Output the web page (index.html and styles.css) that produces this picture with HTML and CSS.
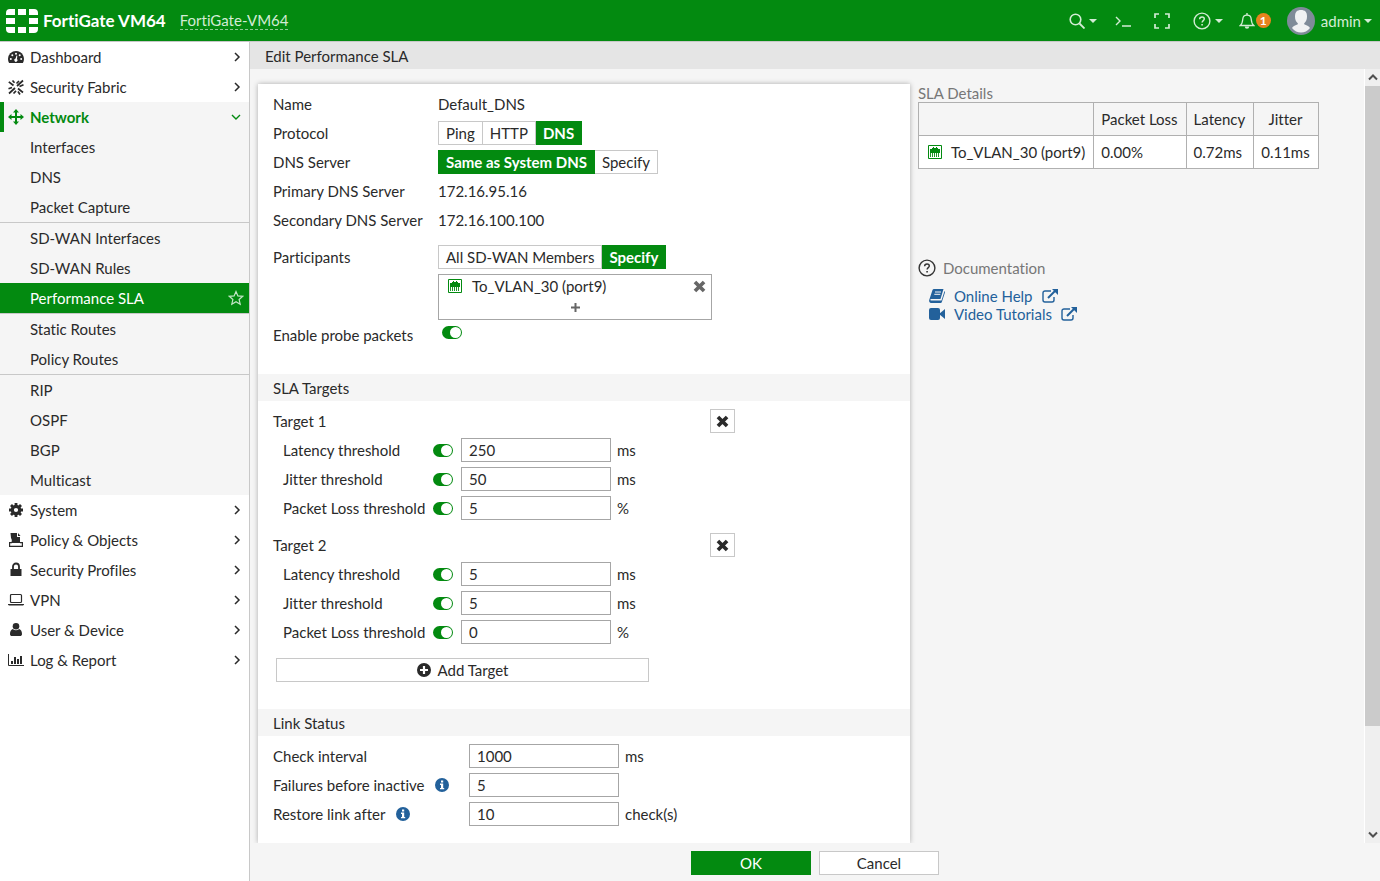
FILE: index.html
```html
<!DOCTYPE html>
<html lang="en">
<head>
<meta charset="utf-8">
<title>FortiGate - Edit Performance SLA</title>
<link rel="stylesheet" href="styles.css">
</head>
<body>
<svg class="sprite" aria-hidden="true">
  <symbol id="chev" viewBox="0 0 8 10"><path d="M2 1l4 4-4 4" fill="none" stroke="currentColor" stroke-width="1.500"/></symbol>
  <symbol id="caret" viewBox="0 0 8 4"><path d="M0 0h8L4 4z" fill="currentColor"/></symbol>
  <symbol id="port" viewBox="0 0 14 14"><path d="M.5.5h13v13H.5z" fill="#fff" stroke="#038a10"/><path d="M2 4h2V3h1V2h1v1h2V2h1v1h1v1h2v4H2z" fill="#038a10"/><path d="M2.500 8v4M4.500 8v4M6.500 8v4M8.500 8v4M10.500 8v4" stroke="#038a10" stroke-width=".9"/></symbol>
  <symbol id="cross" viewBox="0 0 12 12"><path d="M1.800 1.800l8.400 8.400M10.200 1.800l-8.400 8.400" stroke="currentColor" stroke-width="3.400"/></symbol>
  <symbol id="info" viewBox="0 0 14 14"><circle cx="7" cy="7" r="7" fill="currentColor"/><path d="M6 2.500h2.200v2H6zM5 5.600h3.200v4.300h1v1.400H5V9.900h1V7H5z" fill="#fff"/></symbol>
  <symbol id="help" viewBox="0 0 18 18"><circle cx="9" cy="9" r="7.900" fill="none" stroke="currentColor" stroke-width="1.400"/><path d="M6.600 7.200C6.700 5.700 7.700 5 9 5s2.300.8 2.300 2c0 1.600-2.200 1.700-2.200 3.500" fill="none" stroke="currentColor" stroke-width="1.400"/><path d="M8.300 12h1.600v1.500H8.300z" fill="currentColor"/></symbol>
  <symbol id="ext" viewBox="0 0 16 14"><path d="M9 2H3a2 2 0 0 0-2 2v7a2 2 0 0 0 2 2h7a2 2 0 0 0 2-2V8" fill="none" stroke="currentColor" stroke-width="1.400"/><path d="M6 9l7-7" stroke="currentColor" stroke-width="2"/><path d="M10 0h6v6z" fill="currentColor"/></symbol>
</svg>

<header class="topbar">
  <svg class="logo" viewBox="0 0 32 24" role="img" aria-label="Fortinet"><path fill="#fff" d="M4 0h5v6H0V4a4 4 0 0 1 4-4zM12 0h8v6h-8zM23 0h5a4 4 0 0 1 4 4v2h-9zM0 9h9v6H0zM23 9h9v6h-9zM0 18h9v6H4a4 4 0 0 1-4-4zM12 18h8v6h-8zM23 18h9v2a4 4 0 0 1-4 4h-5z"/></svg>
  <span class="product">FortiGate VM64</span>
  <a class="hostname" href="#">FortiGate-VM64</a>
  <div class="tools">
    <button class="tool tool-menu" aria-label="Search"><svg width="16" height="16" viewBox="0 0 16 16"><circle cx="6.500" cy="6.500" r="5.300" fill="none" stroke="currentColor" stroke-width="1.600"/><path d="M10.500 10.500l5 5" stroke="currentColor" stroke-width="1.800"/></svg><svg width="8" height="4"><use href="#caret"/></svg></button>
    <button class="tool" aria-label="CLI console"><svg width="16" height="12" viewBox="0 0 16 12"><path d="M1 2l4 4-4 4M7 11h9" fill="none" stroke="currentColor" stroke-width="1.400"/></svg></button>
    <button class="tool" aria-label="Full screen"><svg width="16" height="16" viewBox="0 0 16 16"><path d="M1 5V1h4M11 1h4v4M15 11v4h-4M5 15H1v-4" fill="none" stroke="currentColor" stroke-width="1.700"/></svg></button>
    <button class="tool tool-menu" aria-label="Help"><svg width="18" height="18"><use href="#help"/></svg><svg width="8" height="4"><use href="#caret"/></svg></button>
    <button class="tool tool-bell" aria-label="Notifications"><svg width="16" height="16" viewBox="0 0 16 16"><path d="M1.300 12.500C3.500 10.700 3.600 8.500 3.800 6 4 3.500 5.500 2.200 8 2.200S12 3.500 12.200 6c.2 2.500.3 4.700 2.500 6.500z" fill="none" stroke="currentColor" stroke-width="1.300"/><path d="M7.300 0h1.400v2H7.300zM5.800 13.500h4.400a2.200 2.200 0 0 1-4.400 0z" fill="currentColor"/></svg><span class="badge">1</span></button>
    <button class="tool tool-user"><svg class="avatar" width="28" height="28" viewBox="0 0 28 28"><circle cx="14" cy="14" r="14" fill="#7f8b99"/><path d="M14 3c4 0 6 2 6 6.500 0 3-1 5.500-2.800 6.800v1c2 1.200 5 1.700 5.800 3.700-2.500 3-5.500 4.500-9 4.500s-6.500-1.500-9-4.500c.8-2 3.800-2.500 5.800-3.700v-1C9 15 8 12.500 8 9.500 8 5 10 3 14 3z" fill="#f0f1f3"/></svg><span>admin</span><svg width="8" height="4"><use href="#caret"/></svg></button>
  </div>
</header>

<div class="shell">
  <nav class="sidebar">
    <a class="item" href="#"><svg class="ico" viewBox="0 0 16 16"><path d="M8 2a8 8 0 0 0-8 8c0 1.500.4 2.900 1.100 4h13.800A8 8 0 0 0 8 2z" fill="currentColor"/><g fill="#fff"><circle cx="2.800" cy="10" r="1"/><circle cx="4.300" cy="6.300" r="1"/><circle cx="8" cy="4.700" r="1"/><circle cx="11.700" cy="6.300" r="1"/><circle cx="13.200" cy="10" r="1"/><path d="M8.500 6.500l.8.200L9 10a1.600 1.600 0 1 1-1.400-.4z"/></g></svg><span>Dashboard</span><svg class="chev"><use href="#chev"/></svg></a>
    <a class="item" href="#"><svg class="ico" viewBox="0 0 16 16"><path d="M0.800 2.800L5.500 6.500M10 9.500l5 4M1 14.500L7 9M9 7l6-5.500M4.500 1.500l2 2.200M8.500 4.500L11 2M0.500 9.800L4 8.500M11.500 7.500l4-1.800M5.500 14.500L8 11.800M10 12.500l2 3" fill="none" stroke="currentColor" stroke-width="1.700"/></svg><span>Security Fabric</span><svg class="chev"><use href="#chev"/></svg></a>
    <a class="item open" href="#"><svg class="ico" viewBox="0 0 16 16"><path d="M8 0l3 3.500H9V7h3.500V5L16 8l-3.500 3V9H9v3.500h2L8 16l-3-3.500h2V9H3.500v2L0 8l3.500-3v2H7V3.500H5z" fill="currentColor"/></svg><span>Network</span><svg class="chev-open" viewBox="0 0 10 8"><path d="M1 2l4 4 4-4" fill="none" stroke="currentColor" stroke-width="1.400"/></svg></a>
    <div class="sub">
      <a class="subitem" href="#">Interfaces</a>
      <a class="subitem" href="#">DNS</a>
      <a class="subitem ruled" href="#">Packet Capture</a>
      <a class="subitem" href="#">SD-WAN Interfaces</a>
      <a class="subitem" href="#">SD-WAN Rules</a>
      <a class="subitem ruled current" href="#" aria-current="page">Performance SLA<svg class="star" viewBox="0 0 16 16"><path d="M8 1.500l1.900 4.400 4.900.4-3.700 3.200 1.100 4.700L8 11.700l-4.200 2.500 1.100-4.700-3.700-3.200 4.900-.4z" fill="none" stroke="currentColor" stroke-width="1.200"/></svg></a>
      <a class="subitem" href="#">Static Routes</a>
      <a class="subitem ruled" href="#">Policy Routes</a>
      <a class="subitem" href="#">RIP</a>
      <a class="subitem" href="#">OSPF</a>
      <a class="subitem" href="#">BGP</a>
      <a class="subitem" href="#">Multicast</a>
    </div>
    <a class="item" href="#"><svg class="ico" viewBox="0 0 16 16"><circle cx="8" cy="8" r="3.700" fill="none" stroke="currentColor" stroke-width="3.200"/><path d="M8 1v3M8 12v3M1 8h3M12 8h3M3 3l2.200 2.200M10.800 10.800L13 13M13 3l-2.200 2.200M5.200 10.800L3 13" stroke="currentColor" stroke-width="2.800"/></svg><span>System</span><svg class="chev"><use href="#chev"/></svg></a>
    <a class="item" href="#"><svg class="ico" viewBox="0 0 16 16"><path d="M2.500 1H9v4h3v6H3c1.200-2 1-3 0-5z" fill="currentColor"/><path d="M10 1l2.500 3H10z" fill="currentColor"/><path d="M4 10.600H1.600v3.800h12.800v-3.800H12" fill="none" stroke="currentColor" stroke-width="1.200"/></svg><span>Policy &amp; Objects</span><svg class="chev"><use href="#chev"/></svg></a>
    <a class="item" href="#"><svg class="ico" viewBox="0 0 16 16"><path d="M2.500 7h11v7h-11z" fill="currentColor"/><path d="M5 7V4.500a3 3 0 0 1 6 0V7" fill="none" stroke="currentColor" stroke-width="1.800"/></svg><span>Security Profiles</span><svg class="chev"><use href="#chev"/></svg></a>
    <a class="item" href="#"><svg class="ico" viewBox="0 0 16 16"><rect x="2.500" y="2.500" width="11" height="8" rx="1" fill="none" stroke="currentColor" stroke-width="1.200"/><path d="M0 12h16v.8l-1 .7H1l-1-.7z" fill="currentColor"/></svg><span>VPN</span><svg class="chev"><use href="#chev"/></svg></a>
    <a class="item" href="#"><svg class="ico" viewBox="0 0 16 16"><circle cx="8" cy="4.200" r="3.300" fill="currentColor"/><path d="M4.800 7C3 7.500 2 9.500 2 12c0 1.500.8 2 2 2h8c1.200 0 2-.5 2-2 0-2.500-1-4.500-2.800-5-1.900 1.600-4.500 1.600-6.400 0z" fill="currentColor"/></svg><span>User &amp; Device</span><svg class="chev"><use href="#chev"/></svg></a>
    <a class="item" href="#"><svg class="ico" viewBox="0 0 16 16"><path d="M.5 2v11.500H16" fill="none" stroke="currentColor"/><path d="M3 9h2v3H3zM6 5h2v7H6zM9 7h2v5H9zM12 4h2v8h-2z" fill="currentColor"/></svg><span>Log &amp; Report</span><svg class="chev"><use href="#chev"/></svg></a>
  </nav>

  <main class="main">
    <h1 class="title">Edit Performance SLA</h1>
    <div class="viewport">
      <div class="content">
        <form class="card" id="sla">
          <div class="group">
            <div class="row"><span class="label">Name</span><span>Default_DNS</span></div>
            <div class="row"><span class="label">Protocol</span><span class="seg"><button type="button">Ping</button><button type="button">HTTP</button><button type="button" class="on">DNS</button></span></div>
            <div class="row"><span class="label">DNS Server</span><span class="seg"><button type="button" class="on">Same as System DNS</button><button type="button">Specify</button></span></div>
            <div class="row"><span class="label">Primary DNS Server</span><span>172.16.95.16</span></div>
            <div class="row"><span class="label">Secondary DNS Server</span><span>172.16.100.100</span></div>
          </div>
          <div class="group">
            <div class="row"><span class="label">Participants</span><span class="seg"><button type="button">All SD-WAN Members</button><button type="button" class="on">Specify</button></span></div>
            <div class="row row-box"><div class="members"><div class="member"><svg width="14" height="14"><use href="#port"/></svg><span>To_VLAN_30 (port9)</span><button type="button" class="plain" aria-label="Remove member"><svg width="13" height="13" viewBox="0 0 12 12"><use href="#cross" width="12" height="12"/></svg></button></div><button type="button" class="plain add" aria-label="Add member"><svg width="9" height="9" viewBox="0 0 9 9"><path d="M4.500 0v9M0 4.500h9" stroke="currentColor" stroke-width="2"/></svg></button></div></div>
            <div class="row row-top"><label class="label" for="probe">Enable probe packets</label><span class="probe"><input class="toggle" type="checkbox" id="probe" checked></span></div>
          </div>

          <h2 class="section">SLA Targets</h2>
          <div class="group">
            <div class="row target-head"><span>Target 1</span><button type="button" class="remove" aria-label="Remove target 1"><svg width="13" height="13"><use href="#cross"/></svg></button></div>
            <div class="row threshold"><label for="l1">Latency threshold</label><input class="toggle" type="checkbox" aria-label="Enable latency threshold" checked><input class="field" id="l1" value="250"><span>ms</span></div>
            <div class="row threshold"><label for="j1">Jitter threshold</label><input class="toggle" type="checkbox" aria-label="Enable jitter threshold" checked><input class="field" id="j1" value="50"><span>ms</span></div>
            <div class="row threshold"><label for="p1">Packet Loss threshold</label><input class="toggle" type="checkbox" aria-label="Enable packet loss threshold" checked><input class="field" id="p1" value="5"><span>%</span></div>
          </div>
          <div class="group">
            <div class="row target-head"><span>Target 2</span><button type="button" class="remove" aria-label="Remove target 2"><svg width="13" height="13"><use href="#cross"/></svg></button></div>
            <div class="row threshold"><label for="l2">Latency threshold</label><input class="toggle" type="checkbox" aria-label="Enable latency threshold" checked><input class="field" id="l2" value="5"><span>ms</span></div>
            <div class="row threshold"><label for="j2">Jitter threshold</label><input class="toggle" type="checkbox" aria-label="Enable jitter threshold" checked><input class="field" id="j2" value="5"><span>ms</span></div>
            <div class="row threshold"><label for="p2">Packet Loss threshold</label><input class="toggle" type="checkbox" aria-label="Enable packet loss threshold" checked><input class="field" id="p2" value="0"><span>%</span></div>
          </div>
          <button type="button" class="add-target"><svg width="14" height="14" viewBox="0 0 14 14"><circle cx="7" cy="7" r="7" fill="currentColor"/><path d="M7 3v8M3 7h8" stroke="#fff" stroke-width="2.200"/></svg>Add Target</button>

          <h2 class="section">Link Status</h2>
          <div class="group">
            <div class="row link"><label for="ci">Check interval</label><input class="field" id="ci" value="1000"><span>ms</span></div>
            <div class="row link"><label for="fb">Failures before inactive<svg class="info" width="14" height="14"><use href="#info"/></svg></label><input class="field" id="fb" value="5"></div>
            <div class="row link"><label for="rl">Restore link after<svg class="info" width="14" height="14"><use href="#info"/></svg></label><input class="field" id="rl" value="10"><span>check(s)</span></div>
          </div>
        </form>

        <aside class="aside">
          <h2 class="aside-title">SLA Details</h2>
          <table class="details">
            <thead><tr><th></th><th>Packet Loss</th><th>Latency</th><th>Jitter</th></tr></thead>
            <tbody><tr><td><span class="port-cell"><svg width="14" height="14"><use href="#port"/></svg>To_VLAN_30 (port9)</span></td><td>0.00%</td><td>0.72ms</td><td>0.11ms</td></tr></tbody>
          </table>
          <h2 class="aside-title docs-title"><svg width="18" height="18"><use href="#help"/></svg>Documentation</h2>
          <ul class="docs">
            <li><a href="#"><svg width="16" height="14" viewBox="0 0 16 14"><path d="M5 0h9.500L11.500 10H2c-1 0-.8 1.500 0 1.500h10.500L15.500 2c.7.5.5 1.500.3 2L13 12.500c-.3 1-.8 1.500-1.800 1.500H2C.5 14-.2 12.500.2 11L3.500 1C3.700.4 4.300 0 5 0z" fill="currentColor"/><path d="M6 3h6M5.300 5.300h6" stroke="#f5f5f5"/></svg><span>Online Help</span><svg width="16" height="14"><use href="#ext"/></svg></a></li>
            <li><a href="#"><svg width="16" height="14" viewBox="0 0 16 14"><rect y="1" width="11" height="12" rx="2" fill="currentColor"/><path d="M10 7l6-5v10z" fill="currentColor"/></svg><span>Video Tutorials</span><svg width="16" height="14"><use href="#ext"/></svg></a></li>
          </ul>
        </aside>
      </div>
      <div class="scrollbar" aria-hidden="true">
        <svg width="16" height="17" viewBox="0 0 16 17"><path d="M4 10.500l4-4 4 4" fill="none" stroke="#505050" stroke-width="2"/></svg>
        <div class="track"><div class="thumb"></div><div class="rest"></div></div>
        <svg width="16" height="17" viewBox="0 0 16 17"><path d="M4 6.500l4 4 4-4" fill="none" stroke="#505050" stroke-width="2"/></svg>
      </div>
    </div>
    <footer class="actions"><button class="btn primary" form="sla">OK</button><button class="btn" type="button">Cancel</button></footer>
  </main>
</div>
</body>
</html>
```
FILE: styles.css
```css
* { box-sizing: border-box; }

:root {
  --green: #038a10;
  --line: #c8c8c8;
  --blue: #23619b;
}

body {
  margin: 0;
  height: 100vh;
  display: flex;
  flex-direction: column;
  overflow: hidden;
  font: 15px/20px Lato, "Liberation Sans", sans-serif;
  font-variant-ligatures: none;
  color: #2a2a2a;
  background: #f5f5f5;
}

button, input { font: inherit; font-variant-ligatures: none; color: inherit; margin: 0; }
button { cursor: pointer; }
a { color: inherit; text-decoration: none; }
h1, h2 { margin: 0; font-size: inherit; font-weight: inherit; }
svg { flex: none; display: block; }
.sprite { position: absolute; width: 0; height: 0; }

/* Top bar */
.topbar {
  flex: none;
  height: 42px;
  display: flex;
  align-items: center;
  padding: 0 8px 0 6px;
  background: var(--green);
  border-bottom: 1px solid var(--line);
  color: #d3ecd5;
}
.logo { width: 32px; height: 24px; }
.product { margin-left: 5px; font-size: 17px; font-weight: 700; color: #fff; }
.hostname { margin-left: 14px; line-height: 17px; border-bottom: 1px dashed #8cca92; }
.tools { margin-left: auto; display: flex; align-items: center; gap: 16px; }
.tool {
  display: flex;
  align-items: center;
  gap: 4px;
  min-width: 23px;
  padding: 0;
  border: 0;
  background: none;
}
.tool-menu { min-width: 30px; }
.tool-bell { gap: 1px; }
.tool-user { gap: 3px; }
.avatar { margin-right: 3px; }
.badge {
  width: 15px;
  height: 15px;
  border-radius: 50%;
  background: #e8831e;
  color: #fff;
  font-size: 12px;
  font-weight: 700;
  line-height: 15px;
  text-align: center;
}

.shell { flex: 1; min-height: 0; display: flex; }

/* Navigation */
.sidebar {
  flex: none;
  width: 250px;
  background: #fff;
  border-right: 1px solid var(--line);
}
.item {
  height: 30px;
  display: flex;
  align-items: center;
  gap: 6px;
  padding: 0 8px;
}
.ico { width: 16px; height: 16px; }
.chev { width: 8px; height: 10px; margin-left: auto; }
.chev-open { width: 10px; height: 8px; margin-left: auto; }
.item.open {
  padding-left: 4px;
  border-left: 4px solid var(--green);
  background: #f5f5f5;
  color: var(--green);
  font-weight: 700;
}
.sub { background: #f5f5f5; }
.subitem {
  display: flex;
  align-items: center;
  justify-content: space-between;
  padding: 5px 5px 5px 30px;
}
.ruled { border-bottom: 1px solid var(--line); }
.current { background: var(--green); background-clip: padding-box; color: #fff; }
.star { width: 16px; height: 16px; color: #c3e6c6; }

/* Main column */
.main { flex: 1; min-width: 0; display: flex; flex-direction: column; }
.title { flex: none; padding: 4px 15px 3px; background: #e5e5e5; }
.viewport { flex: 1; min-height: 0; display: flex; }
.content {
  flex: 1;
  min-width: 0;
  display: grid;
  grid-template-columns: minmax(0, 19fr) minmax(0, 13fr);
  gap: 8px;
  padding: 15px 0 0 8px;
  overflow: hidden;
}
.card { background: #fff; box-shadow: 0 0 5px rgba(0, 0, 0, 0.3); padding-top: 8px; }
.group { display: flex; flex-direction: column; gap: 5px; padding: 0 15px; }
.group + .group { margin-top: 13px; }
.row { display: flex; align-items: center; min-height: 24px; }
.label { width: 165px; }
.row-top { align-items: flex-start; }
.row-box { padding-left: 165px; }
.probe { padding: 1px 4px; }

.seg { display: flex; }
.seg button {
  height: 24px;
  padding: 0 7px;
  border: 1px solid var(--line);
  background: #fff;
  line-height: 20px;
}
.seg button + button { border-left: 0; }
.seg .on { background: var(--green); border-color: var(--green); color: #fff; font-weight: 700; }

.members {
  width: 274px;
  display: flex;
  flex-direction: column;
  padding: 1px 5px;
  border: 1px solid #a6a6a6;
}
.member { display: flex; align-items: center; gap: 10px; padding-left: 4px; }
.plain { display: flex; padding: 0; border: 0; background: none; color: #666; }
.member .plain { margin-left: auto; }
.add { align-self: center; padding: 7px 6px 6px; }

.toggle {
  appearance: none;
  flex: none;
  display: flex;
  justify-content: flex-end;
  width: 20px;
  height: 13px;
  padding: 1px;
  border-radius: 7px;
  background: var(--green);
}
.toggle::before { content: ""; width: 11px; height: 11px; border-radius: 50%; background: #fff; }
.toggle:not(:checked) { justify-content: flex-start; background: #999; }

.section { padding: 4px 15px 3px; margin: 25px 0 8px; background: #f5f5f5; }
.target-head { width: 462px; justify-content: space-between; }
.remove {
  display: flex;
  align-items: center;
  justify-content: center;
  width: 25px;
  height: 24px;
  padding: 0;
  border: 1px solid var(--line);
  background: #fff;
}
.threshold { padding-left: 10px; }
.threshold label { width: 150px; }
.threshold .field { margin-left: 8px; }
.link label { display: flex; align-items: center; gap: 11px; width: 196px; }
.info { color: var(--blue); }
.field {
  width: 150px;
  height: 24px;
  padding: 0 7px;
  border: 1px solid #a6a6a6;
  border-radius: 0;
  background: #fff;
}
.field + span { margin-left: 6px; }
.add-target {
  display: flex;
  align-items: center;
  justify-content: center;
  gap: 7px;
  width: 373px;
  height: 24px;
  margin: 14px 18px 27px;
  border: 1px solid var(--line);
  background: #fff;
}

/* Side information */
.aside-title { line-height: 18px; color: #777; }
.details { border-collapse: collapse; background: #fff; }
.details th, .details td {
  height: 33px;
  padding: 0 8px 0 7px;
  border: 1px solid #b0b0b0;
  font-weight: 400;
}
.details thead { background: #f5f5f5; }
.details td { text-align: left; }
.port-cell { display: flex; align-items: center; gap: 9px; padding-left: 2px; }
.docs-title { display: flex; align-items: center; gap: 7px; margin-top: 90px; }
.docs-title svg { color: #333; }
.docs { margin: 10px 0 0; padding: 0 0 0 11px; list-style: none; line-height: 18px; color: var(--blue); }
.docs a { display: inline-flex; align-items: center; gap: 9px; vertical-align: top; }

.scrollbar { flex: none; width: 16px; display: flex; flex-direction: column; background: #efefef; border-left: 1px solid #fff; }
.track { flex: 1; display: flex; flex-direction: column; }
.thumb { flex: 32; background: #cbcbcb; }
.rest { flex: 5; }

.actions { flex: none; display: flex; justify-content: center; gap: 8px; padding: 8px 0 6px; }
.btn { width: 120px; height: 24px; padding: 0; border: 1px solid var(--line); background: #fff; line-height: 20px; }
.primary { background: var(--green); border-color: var(--green); color: #fff; }
```
